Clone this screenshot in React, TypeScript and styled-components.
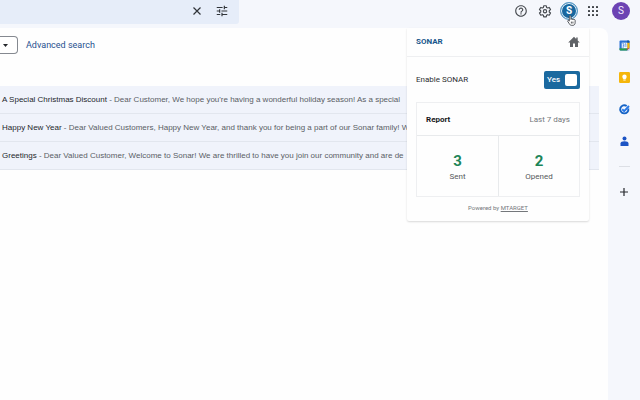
import React from "react";
import styled, { createGlobalStyle } from "styled-components";

const GlobalStyle = createGlobalStyle`
  *, *::before, *::after { box-sizing: border-box; }
  body {
    margin: 0;
    background: #f5f7fc;
    color: #1f2226;
    font-family: Roboto, "Liberation Sans", sans-serif;
    font-size: 8px;
    overflow: hidden;
  }
  button, input { font: inherit; color: inherit; }
`;

const Page = styled.div`
  position: relative;
  display: flex;
  flex-direction: column;
  min-height: 100vh;
`;

const TopBar = styled.header`
  display: flex;
  justify-content: space-between;
  height: 28px;
`;

const SearchBar = styled.div`
  display: flex;
  align-items: center;
  justify-content: flex-end;
  gap: 11px;
  width: 239px;
  height: 24px;
  padding: 0 10px 3px 0;
  background: #e6edf9;
  border-radius: 0 0 3px 0;
`;

const IconButton = styled.button<{ $size?: number }>`
  display: grid;
  place-items: center;
  flex: none;
  width: ${(p) => p.$size ?? 14}px;
  height: ${(p) => p.$size ?? 14}px;
  padding: 0;
  border: 0;
  background: none;
  cursor: pointer;
  svg { display: block; overflow: visible; }
`;

const Actions = styled.nav`
  display: flex;
  align-items: center;
  gap: 10px;
  height: 21px;
  padding-right: 10px;
`;

const Avatar = styled.button`
  width: 18px;
  height: 18px;
  margin-left: 2px;
  padding: 0;
  border: 0;
  border-radius: 50%;
  background: #6c43b3;
  color: #f4edff;
  font-size: 10px;
  line-height: 18px;
`;

const SonarButton = styled.button`
  position: relative;
  width: 18px;
  height: 18px;
  margin: 0 -2px;
  padding: 0;
  border: 1px solid #5d9cc6;
  border-radius: 50%;
  background: #17679f;
  box-shadow: inset 0 0 0 1px #e3f1fb;
  color: #fff;
  font-size: 10px;
  font-weight: 700;
  line-height: 16px;
`;

const Pointer = styled.svg`
  position: absolute;
  left: 6px;
  top: 12px;
`;

const Body = styled.div`
  display: flex;
  flex: 1;
`;

const Main = styled.main`
  flex: 1;
  min-width: 0;
  background: #fefefe;
  border-radius: 0 8px 0 0;
`;

const Filters = styled.div`
  display: flex;
  align-items: center;
  gap: 8px;
  height: 34px;
  margin-bottom: 24px;
`;

const FilterButton = styled.button`
  display: flex;
  align-items: center;
  justify-content: flex-end;
  width: 18px;
  height: 18px;
  padding: 0 9px 0 0;
  border: 1px solid #858990;
  border-left: 0;
  border-radius: 0 4px 4px 0;
  background: #fff;
`;

const AdvancedLink = styled.a`
  color: #27518f;
  font-size: 9px;
  line-height: 12px;
  text-decoration: none;
`;

const MailList = styled.ul`
  margin: 0 9px 0 0;
  padding: 0;
  list-style: none;
  font-family: "Liberation Sans", Arial, sans-serif;
`;

const MailRow = styled.li`
  height: 28px;
  padding-left: 2px;
  border-bottom: 1px solid #e2e6ee;
  background: #f0f3fb;
  color: #5a5e65;
  line-height: 27px;
  overflow: hidden;
  white-space: nowrap;
`;

const Subject = styled.span`
  color: #24272c;
`;

const SideBar = styled.aside`
  display: flex;
  flex-direction: column;
  align-items: center;
  gap: 18px;
  width: 32px;
  padding-top: 10px;
`;

const Divider = styled.hr`
  width: 11px;
  margin: 0;
  border: 0;
  border-top: 1px solid #dcdfe5;
`;

const Popup = styled.section`
  position: absolute;
  top: 28px;
  right: 51px;
  width: 182px;
  padding-bottom: 8px;
  background: #fefefe;
  border-radius: 0 0 2px 2px;
  box-shadow: 0 1px 2px #00000026;
`;

const PopupHeader = styled.header`
  display: flex;
  align-items: center;
  justify-content: space-between;
  height: 29px;
  padding: 0 8px 0 9px;
  border-bottom: 1px solid #eeeff1;
`;

const PopupTitle = styled.h1`
  margin: 0;
  color: #19578b;
  font-size: 8px;
  font-weight: 700;
  line-height: 12px;
`;

const ToggleRow = styled.label`
  display: flex;
  align-items: center;
  justify-content: space-between;
  height: 45px;
  padding: 0 9px;
  color: #2c2e31;
`;

const Toggle = styled.span`
  display: flex;
  align-items: center;
  justify-content: space-between;
  width: 36px;
  height: 18px;
  padding: 0 3px;
  border-radius: 2px;
  background: #1b699f;
  color: #fff;
  font-weight: 500;
`;

const ToggleInput = styled.input`
  appearance: none;
  width: 12px;
  height: 12px;
  margin: 0;
  border-radius: 2px;
  background: #fff;
`;

const Report = styled.section`
  margin: 0 9px;
  border: 1px solid #eeeff1;
`;

const ReportHeader = styled.header`
  display: flex;
  align-items: center;
  justify-content: space-between;
  height: 33px;
  padding: 0 9px;
  border-bottom: 1px solid #e8eaec;
  color: #74777b;
`;

const ReportTitle = styled.h2`
  margin: 0;
  color: #17191b;
  font-size: 8px;
  font-weight: 700;
`;

const Stats = styled.div`
  display: grid;
  grid-template-columns: 1fr 1fr;
`;

const Stat = styled.div`
  display: flex;
  flex-direction: column;
  align-items: center;
  justify-content: center;
  height: 60px;
  padding-top: 4px;
  color: #55585c;
  line-height: 14px;
  & + & { border-left: 1px solid #e8eaec; }
`;

const StatValue = styled.strong`
  color: #1d8558;
  font-size: 15px;
  line-height: 18px;
`;

const Powered = styled.footer`
  padding-top: 6px;
  color: #74777b;
  font-size: 6px;
  line-height: 10px;
  text-align: center;
  a { color: inherit; }
`;

const mails = [
  {
    subject: "A Special Christmas Discount",
    text: "Dear Customer, We hope you're having a wonderful holiday season! As a special",
  },
  {
    subject: "Happy New Year",
    text: "Dear Valued Customers, Happy New Year, and thank you for being a part of our Sonar family! W",
  },
  {
    subject: "Greetings",
    text: "Dear Valued Customer, Welcome to Sonar! We are thrilled to have you join our community and are de",
  },
];

const stats = [
  { value: 3, label: "Sent" },
  { value: 2, label: "Opened" },
];

const CloseIcon = () => (
  <svg width="8" height="8" viewBox="0 0 8 8" stroke="#303439" strokeWidth="1.2" aria-hidden>
    <path d="M.5 .5l7 7M7.500 .5l-7 7" />
  </svg>
);

const TuneIcon = () => (
  <svg width="14" height="14" viewBox="0 0 24 24" fill="#303439" aria-hidden>
    <path d="M3 17v2h6v-2H3zM3 5v2h10V5H3zm10 16v-2h8v-2h-8v-2h-2v6h2zM7 9v2H3v2h4v2h2V9H7zm14 4v-2H11v2h10zm-6-4h2V7h4V5h-4V3h-2v6z" />
  </svg>
);

const HelpIcon = () => (
  <svg width="14" height="14" viewBox="0 0 24 24" fill="#474b50" aria-hidden>
    <path d="M11 18h2v-2h-2v2zm1-16C6.480 2 2 6.480 2 12s4.480 10 10 10 10-4.480 10-10S17.520 2 12 2zm0 18c-4.410 0-8-3.590-8-8s3.590-8 8-8 8 3.590 8 8-3.590 8-8 8zm0-14c-2.210 0-4 1.790-4 4h2c0-1.100.9-2 2-2s2 .9 2 2c0 2-3 1.750-3 5h2c0-2.250 3-2.500 3-5 0-2.210-1.790-4-4-4z" />
  </svg>
);

const SettingsIcon = () => (
  <svg width="14" height="14" viewBox="0 0 24 24" fill="none" stroke="#474b50" strokeWidth="2" strokeLinejoin="round" aria-hidden>
    <path d="M9.800 3h4.400l.5 2.800 1.900 1.100 2.700-1 2.200 3.800-2.200 1.800v2.200l2.200 1.800-2.200 3.800-2.700-1-1.900 1.100-.5 2.600H9.800l-.5-2.600-1.900-1.100-2.700 1-2.200-3.800 2.200-1.800v-2.200L2.500 9.700l2.200-3.800 2.700 1 1.900-1.100z" />
    <circle cx="12" cy="12.500" r="2.800" />
  </svg>
);

const AppsIcon = () => (
  <svg width="10" height="10" viewBox="0 0 10 10" fill="#3c4044" aria-hidden>
    {[0, 4, 8].flatMap((y) =>
      [0, 4, 8].map((x) => <rect key={`${x}-${y}`} x={x} y={y} width="2" height="2" rx=".6" />),
    )}
  </svg>
);

const HandIcon = () => (
  <Pointer width="9" height="11" viewBox="0 0 16 20" fill="#fff" stroke="#34383d" strokeWidth="1.500" strokeLinejoin="round" aria-hidden>
    <path d="M4 11V3c0-2.500 3-2.500 3 0v5c0-1.500 2.600-1.500 2.600.3 0-1.200 2.500-1.200 2.500.5 0-1.100 2.500-.8 2.500.8v4.200c0 3-1.600 5-4.100 5H8c-2 0-3-1.200-4-3l-2.700-4c-1-1.700 1.200-2.800 2.700-.8z" />
    <path d="M7.800 12v3.500M10.600 12v3.500" />
  </Pointer>
);

const HomeIcon = () => (
  <svg width="12" height="12" viewBox="0 0 12 12" fill="#606367" aria-hidden>
    <path d="M6 .8L.2 6.500H2V11h3V7.500h2V11h3V6.500h1.800L9.700 4.400V1.500H8.200v1.400z" />
  </svg>
);

const CalendarIcon = () => (
  <svg width="11" height="11" viewBox="0 0 11 11" aria-hidden>
    <rect x=".5" y=".5" width="10" height="10" rx="1" fill="#2d73d5" />
    <path d="M8.200 2.500h2.300v6H8.200z" fill="#f4b400" />
    <path d="M.5 8.200h7.700v2.300H1.500a1 1 0 0 1-1-1z" fill="#2b9b4a" />
    <path d="M8.200 .5h1.300a1 1 0 0 1 1 1v1.300H8.200z" fill="#1757a8" />
    <path d="M8.200 8.200h2.300l-2.300 2.300z" fill="#df4938" />
    <path d="M10.500 8.200v2.300H8.200z" fill="#f5f7fc" />
    <path d="M2.700 2.700h5.500v5.500H2.700z" fill="#fff" />
    <path d="M3.300 3.700h1.600v3.400H3.300M3.700 5.300h1.200M6 4.100l.9-.5v3.600" fill="none" stroke="#2d73d5" strokeWidth=".7" />
  </svg>
);

const KeepIcon = () => (
  <svg width="11" height="11" viewBox="0 0 11 11" aria-hidden>
    <rect width="11" height="11" rx="1.200" fill="#f5b60b" />
    <circle cx="5.500" cy="4.700" r="2.200" fill="#fff" />
    <path d="M4.300 6h2.400v1.200H4.300zM4.300 7.700h2.400v.8H4.300z" fill="#fff" />
  </svg>
);

const TasksIcon = () => (
  <svg width="11" height="11" viewBox="0 0 11 11" fill="none" aria-hidden>
    <path d="M7.700 2A4.100 4.100 0 1 0 9.300 4.500" stroke="#1764c5" strokeWidth="1.900" />
    <path d="M3.200 5.200l2 1.900L10 2" stroke="#2678e8" strokeWidth="1.900" />
  </svg>
);

const ContactsIcon = () => (
  <svg width="9" height="11" viewBox="0 0 9 11" fill="#1c54c4" aria-hidden>
    <circle cx="4.500" cy="2.500" r="2" />
    <path d="M.5 7.500c0-1.500 1.600-2.300 4-2.300s4 .8 4 2.300V10h-8z" />
  </svg>
);

const PlusIcon = () => (
  <svg width="8" height="8" viewBox="0 0 8 8" stroke="#26292d" strokeWidth="1.200" aria-hidden>
    <path d="M4 0v8M0 4h8" />
  </svg>
);

const CaretIcon = () => (
  <svg width="5" height="3" viewBox="0 0 5 3" fill="#24272b" aria-hidden>
    <path d="M0 0h5L2.500 3z" />
  </svg>
);

export default function App() {
  return (
    <Page>
      <GlobalStyle />
      <TopBar>
        <SearchBar role="search">
          <IconButton aria-label="Clear search"><CloseIcon /></IconButton>
          <IconButton aria-label="Search options"><TuneIcon /></IconButton>
        </SearchBar>
        <Actions aria-label="Account tools">
          <IconButton aria-label="Support"><HelpIcon /></IconButton>
          <IconButton aria-label="Settings"><SettingsIcon /></IconButton>
          <SonarButton>S<HandIcon /></SonarButton>
          <IconButton aria-label="Apps"><AppsIcon /></IconButton>
          <Avatar>S</Avatar>
        </Actions>
      </TopBar>
      <Body>
        <Main>
          <Filters>
            <FilterButton aria-label="More filters"><CaretIcon /></FilterButton>
            <AdvancedLink href="#advanced">Advanced search</AdvancedLink>
          </Filters>
          <MailList>
            {mails.map((mail) => (
              <MailRow key={mail.subject}>
                <Subject>{mail.subject}</Subject> - {mail.text}
              </MailRow>
            ))}
          </MailList>
        </Main>
        <SideBar>
          <IconButton aria-label="Calendar"><CalendarIcon /></IconButton>
          <IconButton aria-label="Keep"><KeepIcon /></IconButton>
          <IconButton aria-label="Tasks"><TasksIcon /></IconButton>
          <IconButton aria-label="Contacts"><ContactsIcon /></IconButton>
          <Divider />
          <IconButton aria-label="Get add-ons"><PlusIcon /></IconButton>
        </SideBar>
      </Body>
      <Popup>
        <PopupHeader>
          <PopupTitle>SONAR</PopupTitle>
          <IconButton aria-label="Home"><HomeIcon /></IconButton>
        </PopupHeader>
        <ToggleRow>
          Enable SONAR
          <Toggle>
            Yes
            <ToggleInput type="checkbox" role="switch" defaultChecked />
          </Toggle>
        </ToggleRow>
        <Report>
          <ReportHeader>
            <ReportTitle>Report</ReportTitle>
            <span>Last 7 days</span>
          </ReportHeader>
          <Stats>
            {stats.map((stat) => (
              <Stat key={stat.label}>
                <StatValue>{stat.value}</StatValue>
                {stat.label}
              </Stat>
            ))}
          </Stats>
        </Report>
        <Powered>
          Powered by <a href="#mtarget">MTARGET</a>
        </Powered>
      </Popup>
    </Page>
  );
}
